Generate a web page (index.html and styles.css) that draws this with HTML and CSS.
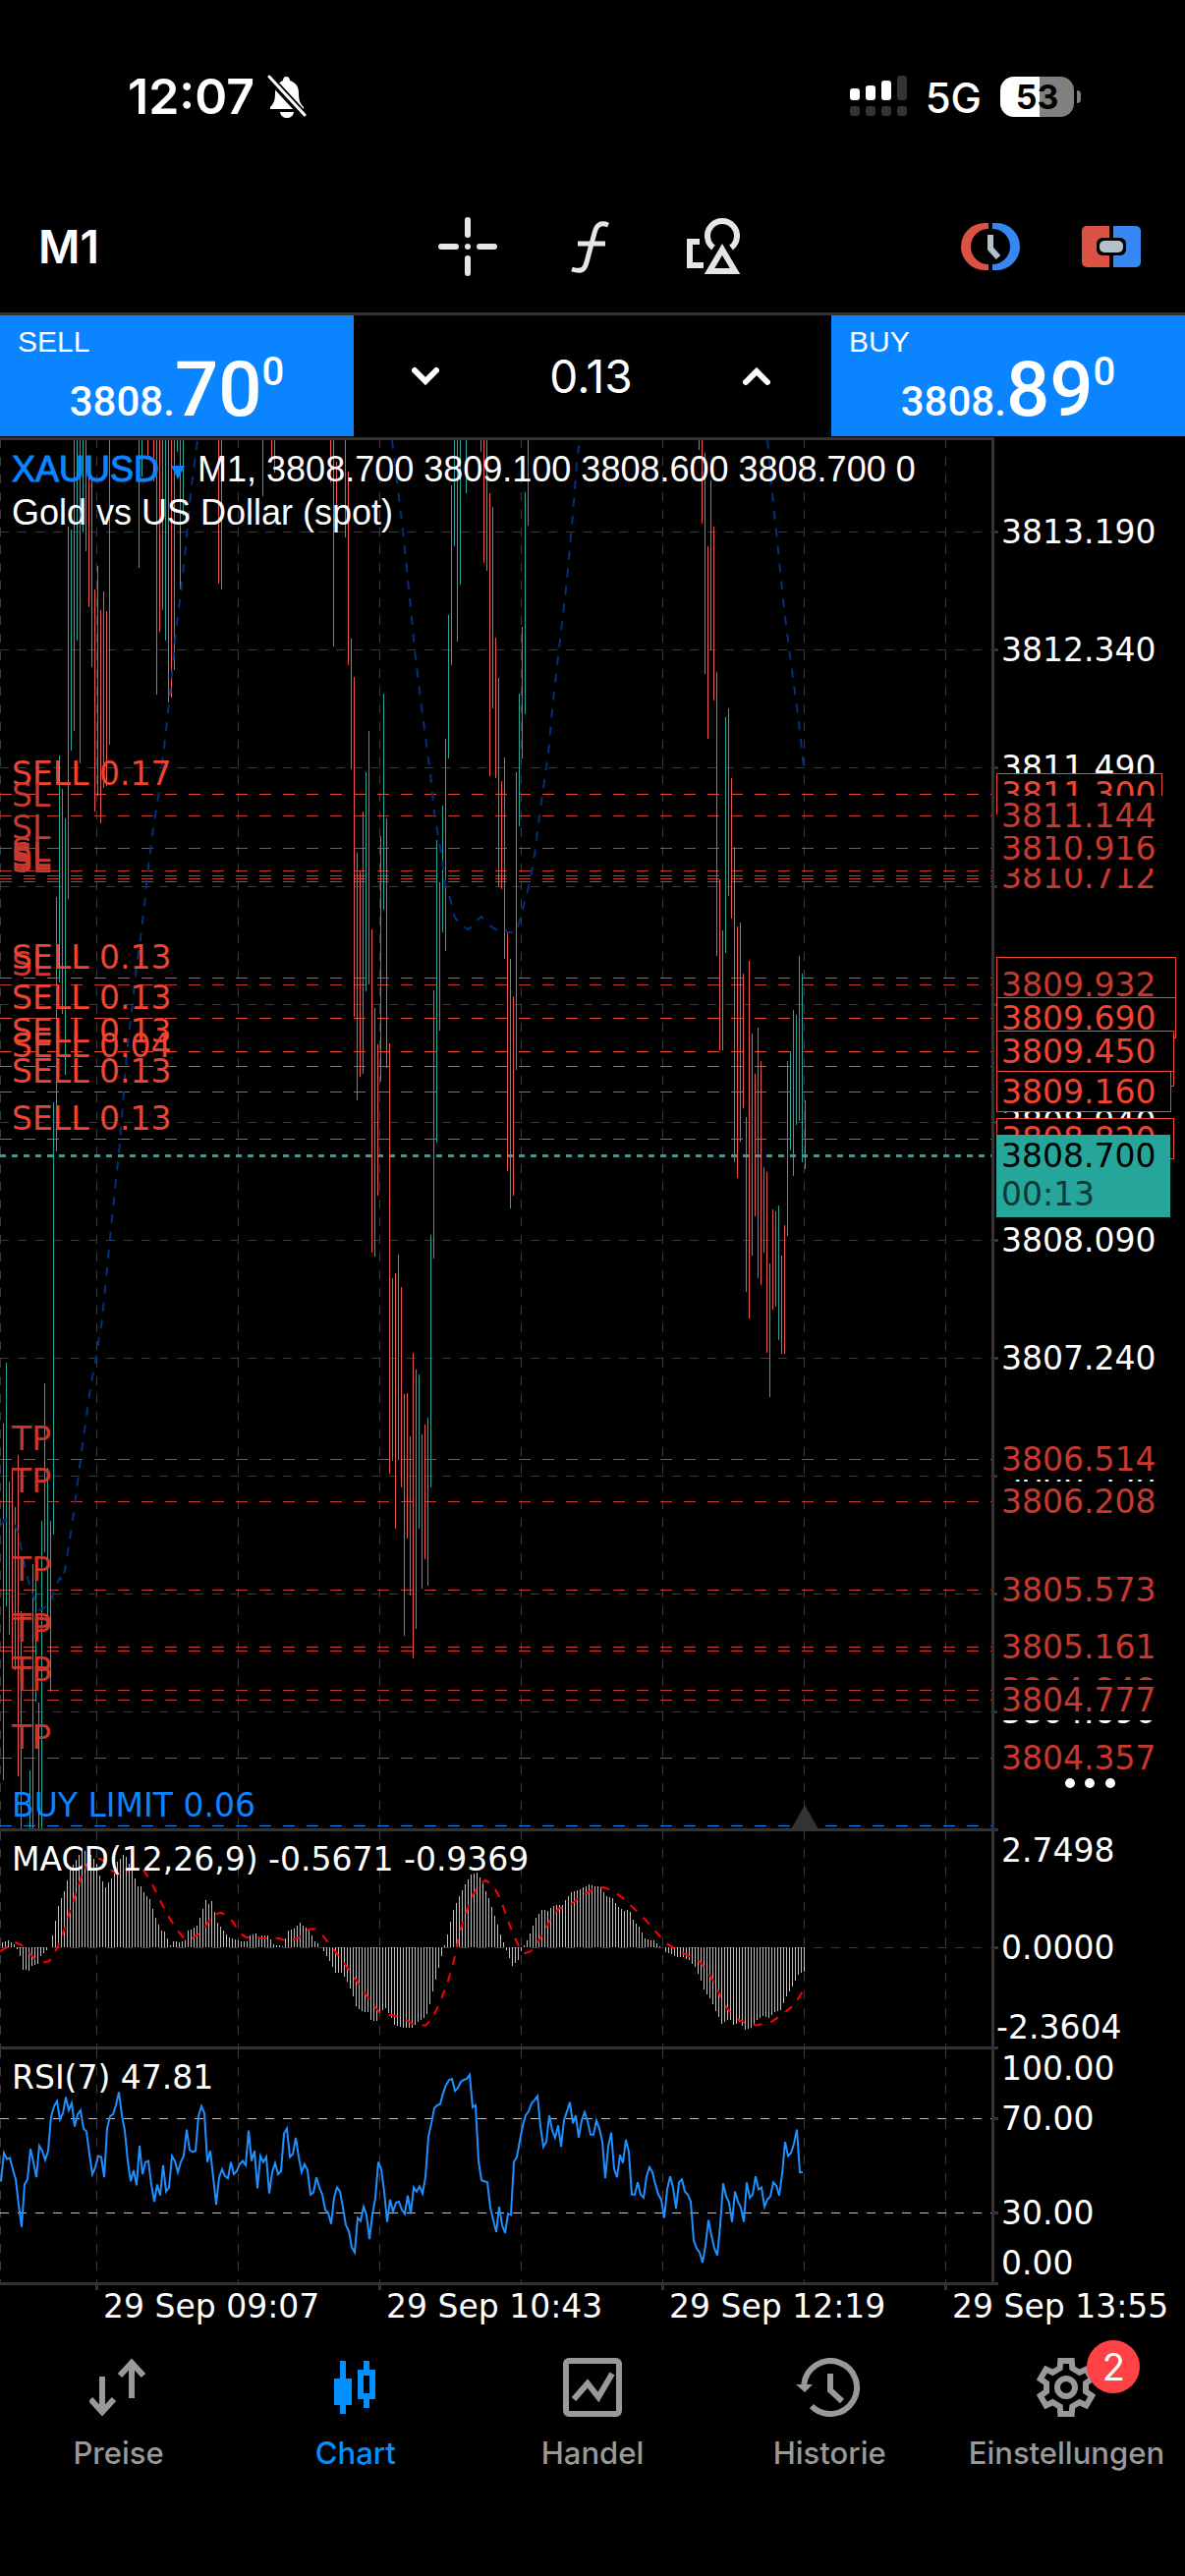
FILE: index.html
```html
<!DOCTYPE html>
<html lang="de">
<head>
  <meta charset="utf-8">
  <meta name="viewport" content="width=device-width, initial-scale=1">
  <title>XAUUSD Chart</title>
  <link rel="stylesheet" href="styles.css">
</head>
<body>
  <header class="status-bar">
    <div class="status-left">
      <span class="clock">12:07</span>
      <svg class="bell" viewBox="0 0 42 44" width="42" height="44">
        <path d="M20 2c3 0 4 2 4 4 6 2 9 6 9 13 0 8 2 11 5 14v2H4v-2c3-3 5-6 5-14 0-7 3-11 8-13 0-2 1-4 3-4z" fill="#fff"/>
        <path d="M14 38h14c-1 8-13 8-14 0z" fill="#fff"/>
        <path d="M1 1l38 41" stroke="#000" stroke-width="8"/>
        <path d="M3 2l36 39" stroke="#fff" stroke-width="3" stroke-linecap="round"/>
      </svg>
    </div>
    <div class="status-right">
      <svg viewBox="0 0 58 42" width="58" height="42">
        <g fill="#fff">
          <rect x="0" y="13" width="10" height="12" rx="3"/>
          <rect x="16" y="10" width="10" height="15" rx="3"/>
          <rect x="32" y="5" width="10" height="20" rx="3"/>
        </g>
        <g fill="#333">
          <rect x="48" y="0" width="10" height="25" rx="3"/>
          <rect x="0" y="31" width="10" height="10" rx="3"/>
          <rect x="16" y="31" width="10" height="10" rx="3"/>
          <rect x="32" y="31" width="10" height="10" rx="3"/>
          <rect x="48" y="31" width="10" height="10" rx="3"/>
        </g>
      </svg>
      <span class="network">5G</span>
      <span class="battery"><span class="battery-text">53</span></span>
    </div>
  </header>

  <div class="toolbar">
    <button class="timeframe">M1</button>
    <div class="tools">
      <button aria-label="Fadenkreuz">
        <svg viewBox="0 0 60 60" width="60" height="60" stroke="#e6e6e6" stroke-width="6" stroke-linecap="round">
          <path d="M30 3v15M30 42v15M3 30h15M42 30h15M30 30h0"/>
        </svg>
      </button>
      <button aria-label="Indikatoren">
        <svg viewBox="0 0 60 60" width="60" height="60" stroke="#e6e6e6" stroke-width="5" fill="none">
          <path d="M49 8c-8-3-12 0-14 8l-8 30c-2 8-6 10-15 7M18 27h28"/>
        </svg>
      </button>
      <button aria-label="Objekte">
        <svg viewBox="-2 0 60 60" width="60" height="60" stroke="#e6e6e6" stroke-width="6" fill="none">
          <path d="M30 31a15 15 0 1 1 18 0M16 25H6v24h14"/>
          <path d="M39 30L23 56h32z" stroke="#000" stroke-width="10"/>
          <path d="M39 33L26 55h26z"/>
        </svg>
      </button>
    </div>
    <div class="panels">
      <button aria-label="Handelszeiten">
        <svg viewBox="0 0 60 60" width="60" height="60">
          <path d="M28 6h-4a24 24 0 0 0 0 48h4v-6a18 18 0 0 1 0-36z" fill="#db5244"/>
          <path d="M32 6h4a24 24 0 0 1 0 48h-4v-6a18 18 0 0 0 0-36z" fill="#3688f0"/>
          <path d="M30 18v14l8 9" stroke="#b3c2ca" stroke-width="6" fill="none"/>
        </svg>
      </button>
      <button aria-label="One-Click-Trading">
        <svg viewBox="0 0 60 60" width="60" height="60">
          <path d="M28 9H5a5 5 0 0 0-5 5v32a5 5 0 0 0 5 5h23z" fill="#db5244"/>
          <path d="M32 9h23a5 5 0 0 1 5 5v32a5 5 0 0 1-5 5H32z" fill="#3688f0"/>
          <rect x="15" y="21" width="30" height="18" rx="6"/>
          <rect x="18" y="24" width="24" height="12" rx="5" fill="#b3c2ca"/>
        </svg>
      </button>
    </div>
  </div>

  <section class="trade">
    <button class="price-button">
      <span class="side">SELL</span>
      <span class="price">3808.<b>70</b><i>0</i></span>
    </button>
    <div class="volume">
      <button aria-label="Weniger"><svg viewBox="0 0 28 20" width="28" height="20"><path d="M3 4l11 11L25 4"/></svg></button>
      <span>0.13</span>
      <button aria-label="Mehr"><svg viewBox="0 0 28 20" width="28" height="20"><path d="M3 16L14 5l11 11"/></svg></button>
    </div>
    <button class="price-button">
      <span class="side">BUY</span>
      <span class="price">3808.<b>89</b><i>0</i></span>
    </button>
  </section>

  <main class="chart">
    <svg id="pricePane" viewBox="0 445 1206 1419"></svg>
    <svg id="macdPane" viewBox="0 1864 1206 222"></svg>
    <svg id="rsiPane" viewBox="0 2086 1206 250"></svg>
    <div class="chart-title">
      <button class="symbol">XAUUSD <span class="caret"></span></button>
      <span>M1, 3808.700 3809.100 3808.600 3808.700 0</span>
      <p>Gold vs US Dollar (spot)</p>
    </div>
    <div class="time-axis">
      <span>29 Sep 09:07</span>
      <span>29 Sep 10:43</span>
      <span>29 Sep 12:19</span>
      <span>29 Sep 13:55</span>
    </div>
  </main>

  <nav class="tabs">
    <a href="#preise">
      <svg viewBox="0 0 60 60" width="60" height="60" class="line-icon"><path d="M13 19v34M1 42l12 13 12-13M43 41V7M31 18L43 5l12 13"/></svg>
      Preise
    </a>
    <a href="#chart" class="active">
      <svg viewBox="2 0 60 60" width="60" height="60">
        <path d="M16 3h6v18h6v27h-6v9h-6v-9h-6V21h6zM40 3h6v9h6v30h-6v9h-6v-9h-6V12h6zm0 15v18h6V18z" fill="currentColor" fill-rule="evenodd"/>
      </svg>
      Chart
    </a>
    <a href="#handel">
      <svg viewBox="0 0 60 60" width="60" height="60" class="line-icon"><rect x="3" y="3" width="54" height="54" rx="3"/><path d="M11 42l14-16 11 14 14-24"/></svg>
      Handel
    </a>
    <a href="#historie">
      <svg viewBox="1 0 68 60" width="68" height="60" class="line-icon">
        <path d="M9.2 27a27 27 0 1 1 7.8 22.2M36 16v17l12 11"/>
        <path d="M1 27h17l-8 8z" fill="currentColor" stroke="none"/>
      </svg>
      Historie
    </a>
    <a href="#einstellungen">
      <svg viewBox="-30 -30 60 60" width="60" height="60" class="line-icon gear">
        <path d="M-5.7-27L5.7-27 6.3-19.5 13.7-15.2 20.5-18.4 26.2-8.6 20-4.3 20 4.3 26.2 8.6 20.5 18.4 13.7 15.2 6.3 19.5 5.7 27-5.7 27-6.3 19.5-13.7 15.2-20.5 18.4-26.2 8.6-20 4.3-20-4.3-26.2-8.6-20.5-18.4-13.7-15.2-6.3-19.5z"/>
        <circle r="9"/>
      </svg>
      Einstellungen
      <span class="badge">2</span>
    </a>
  </nav>

  <script src="chart.js"></script>
</body>
</html>
```
FILE: styles.css
```css
* {
  box-sizing: border-box;
}

body {
  margin: 0;
  min-height: 100vh;
  background: #000;
  color: #fff;
  font-family: Inter, "Liberation Sans", sans-serif;
}

button {
  padding: 0;
  border: none;
  background: none;
  color: inherit;
  font: inherit;
  cursor: pointer;
}

svg {
  display: block;
}

/* status bar */
.status-bar {
  display: flex;
  justify-content: space-between;
  align-items: center;
  height: 184px;
  padding: 12px 113px 0 130px;
}

.status-left,
.status-right {
  display: flex;
  align-items: center;
}

.clock {
  font-size: 50px;
  font-weight: 600;
}

.bell {
  margin-left: 12px;
}

.network {
  margin: 2px 19px 0;
  font-size: 42px;
  font-weight: 500;
}

.battery {
  position: relative;
  width: 75px;
  height: 41px;
  border-radius: 14px;
  background: linear-gradient(90deg, #fff 53%, #808080 53%);
  color: #000;
  font-size: 34px;
  font-weight: 700;
  line-height: 41px;
  text-align: center;
}

.battery::after {
  content: "";
  position: absolute;
  top: 14px;
  right: -7px;
  width: 4px;
  height: 13px;
  border-radius: 0 6px 6px 0;
  background: #808080;
}

/* toolbar */
.toolbar {
  display: grid;
  grid-template-columns: 1fr auto 1fr;
  align-items: center;
  height: 137px;
  padding: 0 45px 0 39px;
  border-bottom: 3px solid #333;
}

.timeframe {
  justify-self: start;
  font-size: 46px;
  font-weight: 600;
}

.tools {
  display: flex;
  gap: 64px;
}

.panels {
  display: flex;
  justify-content: flex-end;
  gap: 63px;
}

/* one click trading */
.trade {
  display: grid;
  grid-template-columns: 360px 1fr 360px;
  height: 124px;
}

.price-button {
  display: flex;
  flex-direction: column;
  align-items: flex-start;
  height: 123px;
  padding: 10px 18px 0;
  background: #0b84ff;
  color: #fff;
  font-family: "Liberation Sans", sans-serif;
}

.side {
  font-size: 30px;
  line-height: 34px;
}

.price {
  align-self: center;
  margin-top: -10px;
  font-family: Roboto, sans-serif;
  font-size: 42px;
  font-weight: 500;
  line-height: 84px;
}

.price b {
  font-size: 78px;
  font-weight: 500;
}

.price i {
  font-size: 40px;
  font-style: normal;
  vertical-align: 31px;
  line-height: 1;
}

.volume {
  display: flex;
  justify-content: space-between;
  align-items: center;
  padding: 0 62px 0 59px;
  font-size: 46px;
}

.volume path {
  fill: none;
  stroke: #fff;
  stroke-width: 6;
  stroke-linecap: round;
}

/* chart */
.chart {
  position: relative;
}

.chart > svg {
  width: 100%;
  height: auto;
  overflow: visible;
}

.chart text,
.time-axis {
  font-family: "DejaVu Sans", sans-serif;
  font-size: 33px;
  fill: #fff;
}

.chart .label-order { fill: #f04432; }
.chart .label-stop { fill: #c8382e; }
.chart .label-limit { fill: #0b84ff; }
.chart .label-current { fill: #000; }
.chart .label-timer { fill: #0a3a36; }

.chart line,
.chart rect {
  shape-rendering: crispEdges;
}

.frame { stroke: #333; stroke-width: 3; }
.grid { stroke: #3a3a3a; stroke-dasharray: 9 9; }
.level { stroke: #c0c0c0; stroke-dasharray: 9 9; }
.order { stroke: #f04432; stroke-dasharray: 12 12; }
.stop { stroke: #c8382e; stroke-dasharray: 12 12; }
.limit { stroke: #0b84ff; stroke-dasharray: 12 12; }
.current { stroke: #26a69a; stroke-width: 3; stroke-dasharray: 6 6; }
.up { stroke: #26a69a; }
.down { stroke: #ef5350; }
.histogram { stroke: #c0c0c0; }
.average { fill: none; stroke: #003080; stroke-width: 2; stroke-dasharray: 9 9; }
.signal { fill: none; stroke: #f00; stroke-width: 2; stroke-dasharray: 9 9; }
.rsi { fill: none; stroke: #1e90ff; stroke-width: 2; }
.tag { fill: #000; }
.tag-order { fill: #000; stroke: #f04432; }
.tag-current { fill: #26a69a; }
.marker { fill: #333; }
.dot { fill: #fff; }

.chart-title {
  position: absolute;
  top: 11px;
  left: 12px;
  font-family: "Liberation Sans", sans-serif;
  font-size: 36px;
  line-height: 44px;
}

.chart-title p {
  margin: 0;
}

.symbol {
  color: #0b84ff;
  -webkit-text-stroke: 1px #0b84ff;
}

.caret {
  display: inline-block;
  margin: 0 3px 2px 2px;
  border: 7px solid transparent;
  border-top: 14px solid #0b84ff;
  border-bottom: none;
}

.time-axis {
  display: grid;
  grid-template-columns: repeat(4, 288px);
  height: 50px;
  margin-top: -10px;
  padding-left: 105px;
  line-height: 44px;
  white-space: nowrap;
}

/* tab bar */
.tabs {
  display: grid;
  grid-template-columns: repeat(5, 1fr);
  padding-top: 24px;
}

.tabs a {
  position: relative;
  display: flex;
  flex-direction: column;
  align-items: center;
  gap: 18px;
  color: #999;
  font-size: 31px;
  font-weight: 500;
  line-height: 38px;
  text-decoration: none;
}

.tabs .active {
  color: #0090ff;
}

.line-icon {
  fill: none;
  stroke: currentColor;
  stroke-width: 6;
}

.badge {
  position: absolute;
  top: -18px;
  left: 50%;
  width: 54px;
  height: 54px;
  margin-left: 21px;
  border-radius: 50%;
  background: #ff4245;
  color: #fff;
  font-size: 38px;
  font-weight: 400;
  line-height: 54px;
  text-align: center;
}
```
FILE: chart.js
```js
// high/low bars: [x, u(p) or d(own), top, bottom]
const bars = [
  [3,"u",1449,1812],[6,"u",1387,1635],[9,"u",1508,1664],[12,"d",1494,1696],[15,"d",1534,1700],[18,"d",1481,1808],
  [21,"d",1640,1861],[30,"u",1802,1861],[33,"u",1592,1861],[36,"u",1596,1732],[39,"d",1733,1861],[42,"u",1548,1861],
  [45,"u",1408,1580],[48,"u",1494,1657],[51,"d",1548,1722],[54,"u",1122,1562],[57,"u",913,1172],[60,"u",769,1000],
  [63,"u",803,1032],[66,"u",833,1094],[69,"u",536,915],[72,"u",539,764],[75,"u",448,744],[78,"u",448,652],
  [81,"u",448,777],[84,"u",448,542],[87,"u",448,561],[90,"d",487,618],[93,"d",487,679],[96,"d",600,826],
  [99,"d",576,810],[102,"d",621,838],[105,"u",602,802],[108,"d",622,800],[111,"u",448,758],[141,"d",448,578],
  [144,"u",448,485],[150,"d",448,464],[156,"d",448,490],[159,"d",448,707],[162,"d",448,643],[165,"d",448,621],
  [168,"u",448,652],[171,"d",448,715],[174,"d",448,710],[177,"u",448,682],[180,"u",448,460],[183,"d",448,600],
  [186,"u",448,525],[222,"d",448,594],[225,"d",448,600],[267,"d",448,505],[276,"d",448,470],[279,"d",448,481],
  [336,"d",448,491],[339,"d",448,658],[342,"d",470,542],[351,"d",448,547],[354,"d",480,677],[357,"d",650,783],
  [360,"d",689,1035],[363,"d",868,1120],[366,"d",887,1096],[369,"d",826,1093],[372,"u",786,1009],[375,"u",744,1002],
  [378,"d",946,1275],[381,"d",1026,1279],[384,"d",1063,1217],[387,"u",851,1101],[390,"u",706,926],[393,"d",833,1087],
  [396,"d",1062,1500],[399,"d",1301,1487],[402,"d",1296,1556],[405,"d",1277,1486],[408,"d",1310,1514],[411,"d",1419,1665],
  [414,"d",1418,1566],[417,"d",1462,1624],[420,"d",1377,1688],[423,"d",1394,1658],[426,"u",1399,1556],[429,"d",1460,1617],
  [432,"d",1450,1587],[435,"d",1443,1614],[438,"u",1257,1514],[441,"u",1008,1281],[444,"u",855,1163],[447,"u",898,1049],
  [450,"u",820,949],[453,"u",752,968],[456,"u",626,772],[459,"u",494,677],[462,"u",448,556],[465,"u",448,653],
  [468,"u",448,595],[474,"u",448,502],[489,"d",448,460],[492,"d",448,573],[495,"d",448,581],[498,"d",502,790],
  [501,"d",516,721],[504,"d",649,792],[507,"d",690,903],[510,"d",795,905],[513,"d",771,976],[516,"d",949,1192],
  [519,"d",976,1230],[522,"d",1014,1217],[525,"u",786,1089],[528,"u",706,841],[531,"u",638,772],[534,"u",501,727],
  [537,"u",448,535],[711,"d",448,458],[714,"d",448,533],[717,"d",461,686],[720,"d",556,752],[723,"d",489,662],
  [726,"d",536,713],[729,"d",684,973],[732,"d",895,1069],[735,"d",947,1069],[738,"u",730,970],[741,"u",721,912],
  [744,"d",792,935],[747,"d",862,1183],[750,"d",943,1199],[753,"d",939,1162],[756,"d",991,1128],[759,"d",1137,1315],
  [762,"d",978,1342],[765,"d",1052,1278],[768,"d",1093,1238],[771,"u",1046,1301],[774,"d",1080,1308],[777,"d",1188,1275],
  [780,"d",1193,1377],[783,"d",1286,1422],[786,"d",1231,1333],[789,"u",1233,1330],[792,"u",1227,1364],[795,"d",1278,1378],
  [798,"d",1247,1378],[801,"u",1080,1258],[804,"u",1070,1171],[807,"u",1028,1197],[810,"u",1033,1145],[813,"u",973,1141],
  [816,"u",991,1183],[819,"d",1120,1190]
];

const averages = [
  "2,1552 4,1547 11,1548 15,1552 19,1562 23,1583 27,1603 33,1622 37,1633 40,1639 47,1635 52,1631 55,1618 61,1606 64,1609 67,1593 70,1573 75,1540 82,1485 87,1448 92,1413 98,1380 104,1343 111,1270 115,1230 122,1163 129,1073 135,1020 139,983 143,955 148,913 150,890 156,843 162,805 169,743 174,697 179,643 185,595 189,557 194,503 197,477 201,448",
  "399,448 404,490 410,540 417,610 423,670 429,720 438,787 442,828 448,863 453,898 458,915 463,934 470,942 477,946 484,938 490,933 497,941 504,946 511,944 517,949 525,949 528,940 532,925 537,907 540,893 544,870 550,823 558,767 563,713 569,660 577,590 583,523 587,470 590,448",
  "781,448 786,503 792,560 798,620 804,667 811,720 815,753 818,781"
];

// [y, style, text at the left]
const orders = [
  [808,"order","SELL 0.17"],[830,"stop","SL"],[863,"stop","SL"],[886,"stop","SL"],[891,"stop","SL"],
  [894,"stop","SL"],[897,"stop","SL"],[1002,"stop","SL"],[995,"order","SELL 0.13"],[1036,"order","SELL 0.13"],
  [1070,"order","SELL 0.13"],[1085,"order","SELL 0.04"],[1111,"order","SELL 0.13"],[1159,"order","SELL 0.13"],
  [1485,"stop","TP"],[1528,"stop","TP"],[1618,"stop","TP"],[1676,"stop","TP"],[1680,"stop","TP"],
  [1720,"stop","TP"],[1730,"stop","TP"],[1789,"stop","TP"],[1858,"limit","BUY LIMIT 0.06"]
];

// prices without a text are covered by the order tags
const gridPrices = [
  [541,"3813.190"],[661,"3812.340"],[781,"3811.490"],[902,""],[1022,""],[1142,"3808.940"],
  [1262,"3808.090"],[1382,"3807.240"],[1502,"3806.390"],[1622,""],[1742,"3804.690"]
];

// later tags cover earlier ones: [y, style, price, width of the box]
const tags = [
  [808,"order","3811.300",168],[892,"stop","3810.712",168],[863,"stop","3810.916",168],[830,"stop","3811.144",168],
  [995,"order","3809.980",182],[1002,"stop","3809.932",180],[1036,"order","3809.690",182],[1085,"order","3809.345",180],
  [1070,"order","3809.450",180],[1111,"order","3809.160",177],[1159,"order","3808.820",180],
  [1485,"stop","3806.514",177],[1528,"stop","3806.208",177],[1618,"stop","3805.573",177],[1676,"stop","3805.161",177],
  [1720,"stop","3804.848",177],[1730,"stop","3804.777",177],[1789,"stop","3804.357",177]
];

// histogram knots: bar number, height
const macd = [
  0,5,2,7,4,3,5,-2,6,-9,7,-22,9,-23,10,-18,12,-16,13,-9,15,-3,16,0,17,12,18,26,19,41,21,55,23,76,25,86,27,96,29,94,
  31,87,32,82,33,71,35,59,37,68,39,84,41,91,42,89,44,76,46,60,47,60,48,54,50,47,52,29,54,16,55,15,57,2,58,6,60,5,
  62,7,63,16,66,21,67,29,69,46,70,43,71,45,73,24,75,16,77,10,79,8,81,6,83,6,84,12,86,14,87,11,90,12,92,3,95,1,
  96,9,97,16,99,18,101,24,102,21,104,17,106,6,107,4,109,-4,111,-14,113,-25,115,-25,117,-34,119,-48,120,-58,
  122,-63,124,-64,125,-72,127,-73,128,-64,130,-60,132,-70,133,-76,136,-79,139,-79,140,-76,143,-70,144,-66,
  145,-56,147,-32,149,-9,150,2,151,13,153,37,155,50,157,62,159,72,161,74,163,63,165,48,167,31,169,13,170,5,
  172,-11,173,-18,175,-13,176,-4,178,7,180,21,181,29,183,37,185,36,187,41,190,42,193,54,196,57,199,62,200,61,
  203,59,205,50,207,48,209,40,211,36,212,37,213,35,214,27,216,20,218,9,220,7,221,7,223,1,224,0,225,-5,227,-7,
  229,-10,231,-10,233,-13,235,-19,237,-33,238,-42,240,-50,242,-63,244,-75,246,-72,247,-72,248,-76,250,-74,
  252,-81,254,-79,256,-72,258,-68,260,-70,262,-64,264,-62,266,-48,268,-39,270,-27,272,-24
];

// signal line: x, height
const signal = [
  0,-4,7,0,15,5,22,2,30,-6,35,-11,44,-15,50,-14,58,-1,65,16,70,32,76,49,82,67,88,81,94,87,102,87,106,85,113,76,
  119,72,127,74,133,77,138,79,146,76,154,64,163,46,171,31,181,16,188,8,196,9,204,14,210,22,217,32,225,34,231,31,
  237,25,244,14,250,10,265,9,283,9,292,6,304,9,315,18,321,18,329,11,338,0,348,-13,358,-26,367,-39,379,-56,386,-64,
  392,-66,400,-67,412,-71,423,-77,433,-77,440,-70,448,-54,456,-33,462,-13,467,11,473,31,481,51,487,61,494,66,
  502,61,510,46,517,26,523,11,529,-1,534,-6,540,-4,545,1,554,16,562,31,569,38,579,41,590,49,600,55,605,58,614,59,
  623,56,633,49,642,41,654,30,666,17,675,7,681,2,693,-5,702,-9,712,-14,720,-24,728,-36,735,-53,743,-64,751,-71,
  760,-75,770,-77,786,-73,799,-64,809,-56,819,-40
];

// one value every 3px
const rsi = [
  129,101,107,106,117,127,152,174,132,127,97,110,125,94,99,108,99,65,55,50,68,62,46,59,52,75,63,59,77,80,102,122,
  115,104,105,125,77,65,63,54,41,64,79,109,129,118,133,94,122,110,109,132,149,132,143,113,139,135,104,109,120,110,
  104,78,98,100,99,65,55,62,110,99,125,152,125,117,124,126,110,122,119,112,109,113,79,109,99,136,104,110,105,141,
  120,111,122,119,82,77,105,102,86,105,120,112,118,142,140,125,135,142,157,160,171,145,135,139,155,172,178,194,199,
  165,168,154,162,186,162,145,110,117,139,169,147,159,150,149,157,161,143,161,135,139,134,141,125,85,72,57,54,53,42,
  34,29,28,40,37,31,29,28,24,56,54,109,128,129,130,155,167,179,154,172,180,161,162,110,105,89,74,64,60,52,49,45,75,
  95,90,64,79,86,74,95,69,60,51,72,64,86,69,61,70,83,83,69,77,90,126,95,81,117,125,103,111,88,100,142,142,130,142,
  145,124,115,120,132,142,147,165,137,124,135,156,130,127,139,142,149,187,195,199,209,192,167,182,195,202,172,131,
  144,150,169,139,149,155,169,130,145,142,124,137,135,154,147,144,130,133,143,122,90,104,101,92,78,120,120
];

const gridX = [98, 242, 386, 530, 674, 818, 962];

function add(pane, tag, cls, attrs, text) {
  const el = document.createElementNS("http://www.w3.org/2000/svg", tag);
  if (cls) el.setAttribute("class", cls);
  for (const key in attrs) el.setAttribute(key, attrs[key]);
  if (text) el.textContent = text;
  pane.appendChild(el);
}

function line(pane, cls, x1, y1, x2, y2) {
  add(pane, "line", cls, { x1: x1, y1: y1, x2: x2, y2: y2 });
}

function label(pane, x, y, text, cls) {
  add(pane, "text", cls, { x: x, y: y }, text);
}

function frame(pane, top, bottom) {
  gridX.forEach(x => line(pane, "grid", x + .5, top, x + .5, bottom));
  line(pane, "grid", .5, top, .5, bottom);
  line(pane, "frame", 1010.5, top, 1010.5, bottom);
}

// price pane
const price = document.getElementById("pricePane");
frame(price, 447, 1862);
gridPrices.forEach(([y, text]) => {
  line(price, "grid", 0, y + .5, 1009, y + .5);
  line(price, "frame", 1011, y + .5, 1016, y + .5);
  if (text) label(price, 1019, y + 12, text);
});
orders.forEach(([y, cls]) => line(price, cls, 0, y + .5, 1009, y + .5));
line(price, "current", 0, 1176.5, 1009, 1176.5);
bars.forEach(([x, dir, top, bottom]) => line(price, dir === "u" ? "up" : "down", x + .5, top, x + .5, bottom));
averages.forEach(points => add(price, "polyline", "average", { points: points }));
orders.forEach(([y, cls, text]) => label(price, 12, y - 9, text, "label-" + cls));

tags.forEach(([y, cls, text, width]) => {
  const box = cls === "order" ? "tag-order" : "tag";
  add(price, "rect", box, { x: 1014.5, y: y - 20.5, width: width, height: 41 });
  label(price, 1019, y + 12, text, "label-" + cls);
});
add(price, "rect", "tag-current", { x: 1014, y: 1155, width: 177, height: 84 });
label(price, 1019, 1188, "3808.700", "label-current");
label(price, 1019, 1227, "00:13", "label-timer");

[1089, 1109, 1130].forEach(x => add(price, "circle", "dot", { cx: x, cy: 1815, r: 5 }));
add(price, "polygon", "marker", { points: "819,1837 805,1862 833,1862" });
line(price, "frame", 0, 446.5, 1012, 446.5);
line(price, "frame", 0, 1862.5, 1016, 1862.5);

// MACD pane
const macdPane = document.getElementById("macdPane");
const zero = 1982;
const scale = 31 / 30;
frame(macdPane, 1864, 2084);
line(macdPane, "grid", 0, zero + .5, 1009, zero + .5);
line(macdPane, "frame", 1011, zero + .5, 1016, zero + .5);
for (let k = 0; k < macd.length - 2; k += 2) {
  const [from, h1, to, h2] = macd.slice(k, k + 4);
  for (let n = from; n <= to; n++) {
    const h = h1 + (h2 - h1) * (n - from) / (to - from);
    if (n < to || to === 272) line(macdPane, "histogram", 2.5 + n * 3, zero, 2.5 + n * 3, zero - Math.round(h * scale));
  }
}
let points = "";
for (let k = 0; k < signal.length; k += 2) {
  points += signal[k] + "," + (zero - signal[k + 1] * scale) + " ";
}
add(macdPane, "polyline", "signal", { points: points });
label(macdPane, 12, 1904, "MACD(12,26,9) -0.5671 -0.9369");
label(macdPane, 1019, 1895, "2.7498");
label(macdPane, 1019, 1994, "0.0000");
label(macdPane, 1014, 2075, "-2.3604");
line(macdPane, "frame", 0, 2084.5, 1016, 2084.5);

// RSI pane
const rsiPane = document.getElementById("rsiPane");
frame(rsiPane, 2086, 2324);
[2156, 2252].forEach(y => {
  line(rsiPane, "level", 0, y + .5, 1009, y + .5);
  line(rsiPane, "frame", 1011, y + .5, 1016, y + .5);
});
add(rsiPane, "polyline", "rsi", { points: rsi.map((v, n) => (n * 3 + 1) + "," + (2087 + v * scale)).join(" ") });
label(rsiPane, 12, 2126, "RSI(7) 47.81");
label(rsiPane, 1019, 2117, "100.00");
label(rsiPane, 1019, 2168, "70.00");
label(rsiPane, 1019, 2264, "30.00");
label(rsiPane, 1019, 2315, "0.00");
line(rsiPane, "frame", 0, 2324.5, 1016, 2324.5);
[98, 386, 674, 962].forEach(x => line(rsiPane, "frame", x + .5, 2325, x + .5, 2331));
```
